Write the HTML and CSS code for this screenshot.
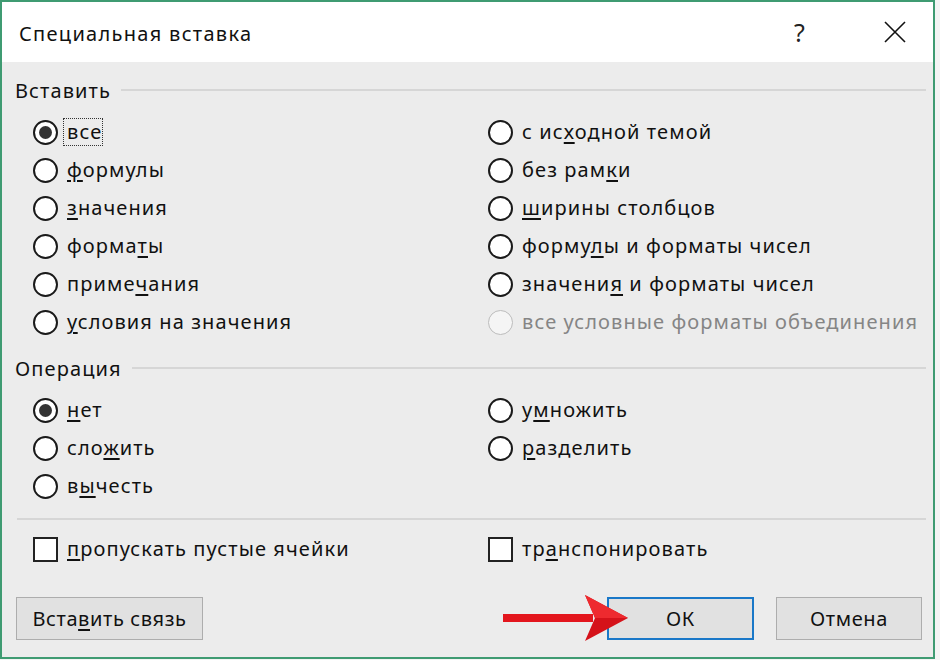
FILE: index.html
```html
<!DOCTYPE html>
<html lang="ru">
<head>
<meta charset="utf-8">
<title>Специальная вставка</title>
<link rel="stylesheet" href="styles.css">
</head>
<body>
<div class="window">
  <div class="titlebar">
    <div class="title">Специальная вставка</div>
    <div class="help">?</div>
    <div class="close">
      <svg width="22" height="22" viewBox="0 0 22 22"><path d="M1 1 L21 21 M21 1 L1 21" stroke="#111" stroke-width="1.6" fill="none"/></svg>
    </div>
  </div>
  <div class="content">
    <div class="group-head"><span>Вставить</span><div class="rule"></div></div>
    <div class="options six">
      <div class="opt"><span class="radio on"></span><span class="lbl focus">все</span></div>
      <div class="opt"><span class="radio"></span><span class="lbl">с ис<u>х</u>одной темой</span></div>
      <div class="opt"><span class="radio"></span><span class="lbl"><u>ф</u>ормулы</span></div>
      <div class="opt"><span class="radio"></span><span class="lbl">без рам<u>к</u>и</span></div>
      <div class="opt"><span class="radio"></span><span class="lbl"><u>з</u>начения</span></div>
      <div class="opt"><span class="radio"></span><span class="lbl"><u>ш</u>ирины столбцов</span></div>
      <div class="opt"><span class="radio"></span><span class="lbl">форма<u>т</u>ы</span></div>
      <div class="opt"><span class="radio"></span><span class="lbl">форму<u>л</u>ы и форматы чисел</span></div>
      <div class="opt"><span class="radio"></span><span class="lbl">приме<u>ч</u>ания</span></div>
      <div class="opt"><span class="radio"></span><span class="lbl">значени<u>я</u> и форматы чисел</span></div>
      <div class="opt"><span class="radio"></span><span class="lbl"><u>у</u>словия на значения</span></div>
      <div class="opt disabled"><span class="radio"></span><span class="lbl">все условные форматы объединения</span></div>
    </div>
    <div class="group-head second"><span>Операция</span><div class="rule"></div></div>
    <div class="options">
      <div class="opt"><span class="radio on"></span><span class="lbl"><u>н</u>ет</span></div>
      <div class="opt"><span class="radio"></span><span class="lbl">у<u>м</u>ножить</span></div>
      <div class="opt"><span class="radio"></span><span class="lbl">сло<u>ж</u>ить</span></div>
      <div class="opt"><span class="radio"></span><span class="lbl"><u>р</u>азделить</span></div>
      <div class="opt"><span class="radio"></span><span class="lbl">в<u>ы</u>честь</span></div>
    </div>
    <div class="separator"></div>
    <div class="options checks">
      <div class="opt"><span class="check"></span><span class="lbl"><u>п</u>ропускать пустые ячейки</span></div>
      <div class="opt"><span class="check"></span><span class="lbl">тр<u>а</u>нспонировать</span></div>
    </div>
    <div class="buttons">
      <button class="btn link">Вста<u>в</u>ить связь</button>
      <div class="spacer"></div>
      <div class="ok-wrap">
        <button class="btn ok">ОК</button>
        <svg class="arrow" width="130" height="50" viewBox="0 0 130 50">
          <rect x="0" y="21" width="90" height="8" fill="#e3161d"/>
          <path d="M82 2 L125 25 L82 48 L92 25 Z" fill="#d5121a"/>
          <path d="M82 2 L125 25 L92 25 Z" fill="#ee2a2f"/>
        </svg>
      </div>
      <button class="btn cancel">Отмена</button>
    </div>
  </div>
</div>
</body>
</html>
```

FILE: styles.css
```css
html, body {
  margin: 0;
  padding: 0;
  background: #f4f4f4;
}
body {
  font-family: "Noto Sans", "Open Sans", sans-serif;
  color: #111;
  width: 940px;
  height: 660px;
  overflow: hidden;
}
.window {
  box-sizing: border-box;
  width: 935px;
  height: 659px;
  border: 2px solid #3f9b72;
  background: #ececec;
  display: flex;
  flex-direction: column;
}
.titlebar {
  height: 60px;
  background: #ffffff;
  display: flex;
  align-items: center;
  padding-left: 17px;
  padding-right: 27px;
}
.title {
  font-size: 20px;
  letter-spacing: 1.3px;
  flex: 1;
  padding-top: 2px;
}
.help {
  font-size: 25px;
  width: 20px;
  margin-right: 70px;
  color: #222;
}
.close {
  width: 22px;
  height: 22px;
  display: flex;
}
.content {
  padding: 0 0 0 13px;
  display: flex;
  flex-direction: column;
  font-size: 20px;
  letter-spacing: 1.1px;
}
.group-head {
  display: flex;
  align-items: center;
  height: 24px;
  margin-top: 16px;
  padding-right: 7px;
}
.group-head.second {
  margin-top: 15px;
}
.group-head span {
  margin-right: 10px;
}
.rule {
  flex: 1;
  height: 2px;
  background: #d6d6d6;
}
.options {
  display: grid;
  grid-template-columns: 455px 1fr;
  grid-auto-rows: 38px;
  margin-top: 11px;
  padding-left: 18px;
}
.opt {
  display: flex;
  align-items: center;
  white-space: nowrap;
}
.lbl {
  margin-left: 7px;
  line-height: 26px;
  padding: 0 2px;
}
.lbl u {
  text-decoration-thickness: 2px;
  text-underline-offset: 3px;
}
.lbl.focus {
  outline: 1px dotted #333;
  outline-offset: 0;
  margin-left: 6px;
  padding: 0 0 0 3px;
}
.radio {
  box-sizing: border-box;
  width: 25px;
  height: 25px;
  border: 2px solid #1a1a1a;
  border-radius: 50%;
  background: #fff;
  display: flex;
  align-items: center;
  justify-content: center;
  flex: none;
}
.radio.on::after {
  content: "";
  width: 13px;
  height: 13px;
  border-radius: 50%;
  background: #333;
}
.opt.disabled .lbl {
  color: #858585;
}
.opt.disabled .radio {
  border-color: #bcbcbc;
  border-width: 1.5px;
  background: #f5f5f5;
}
.separator {
  height: 2px;
  background: #d6d6d6;
  margin: 13px 7px 0 2px;
}
.checks {
  margin-top: 10px;
}
.check {
  box-sizing: border-box;
  width: 25px;
  height: 25px;
  border: 2px solid #222;
  background: #fff;
  flex: none;
}
.buttons {
  display: flex;
  margin-top: 29px;
  padding-right: 11px;
  align-items: center;
}
.btn {
  box-sizing: border-box;
  height: 43px;
  font-family: "Noto Sans", "Open Sans", sans-serif;
  font-size: 20px;
  letter-spacing: 0.6px;
  color: #111;
  background: #e1e1e1;
  border: 1px solid #adadad;
  padding: 0;
  margin: 0;
}
.btn u {
  text-decoration-thickness: 2px;
  text-underline-offset: 3px;
}
.link {
  width: 187px;
  margin-left: 1px;
}
.spacer {
  flex: 1;
}
.ok-wrap {
  position: relative;
  margin-right: 22px;
}
.ok {
  width: 147px;
  border: 2px solid #1a78c8;
  display: block;
}
.cancel {
  width: 146px;
}
.arrow {
  position: absolute;
  left: -104px;
  top: -4px;
}
```
